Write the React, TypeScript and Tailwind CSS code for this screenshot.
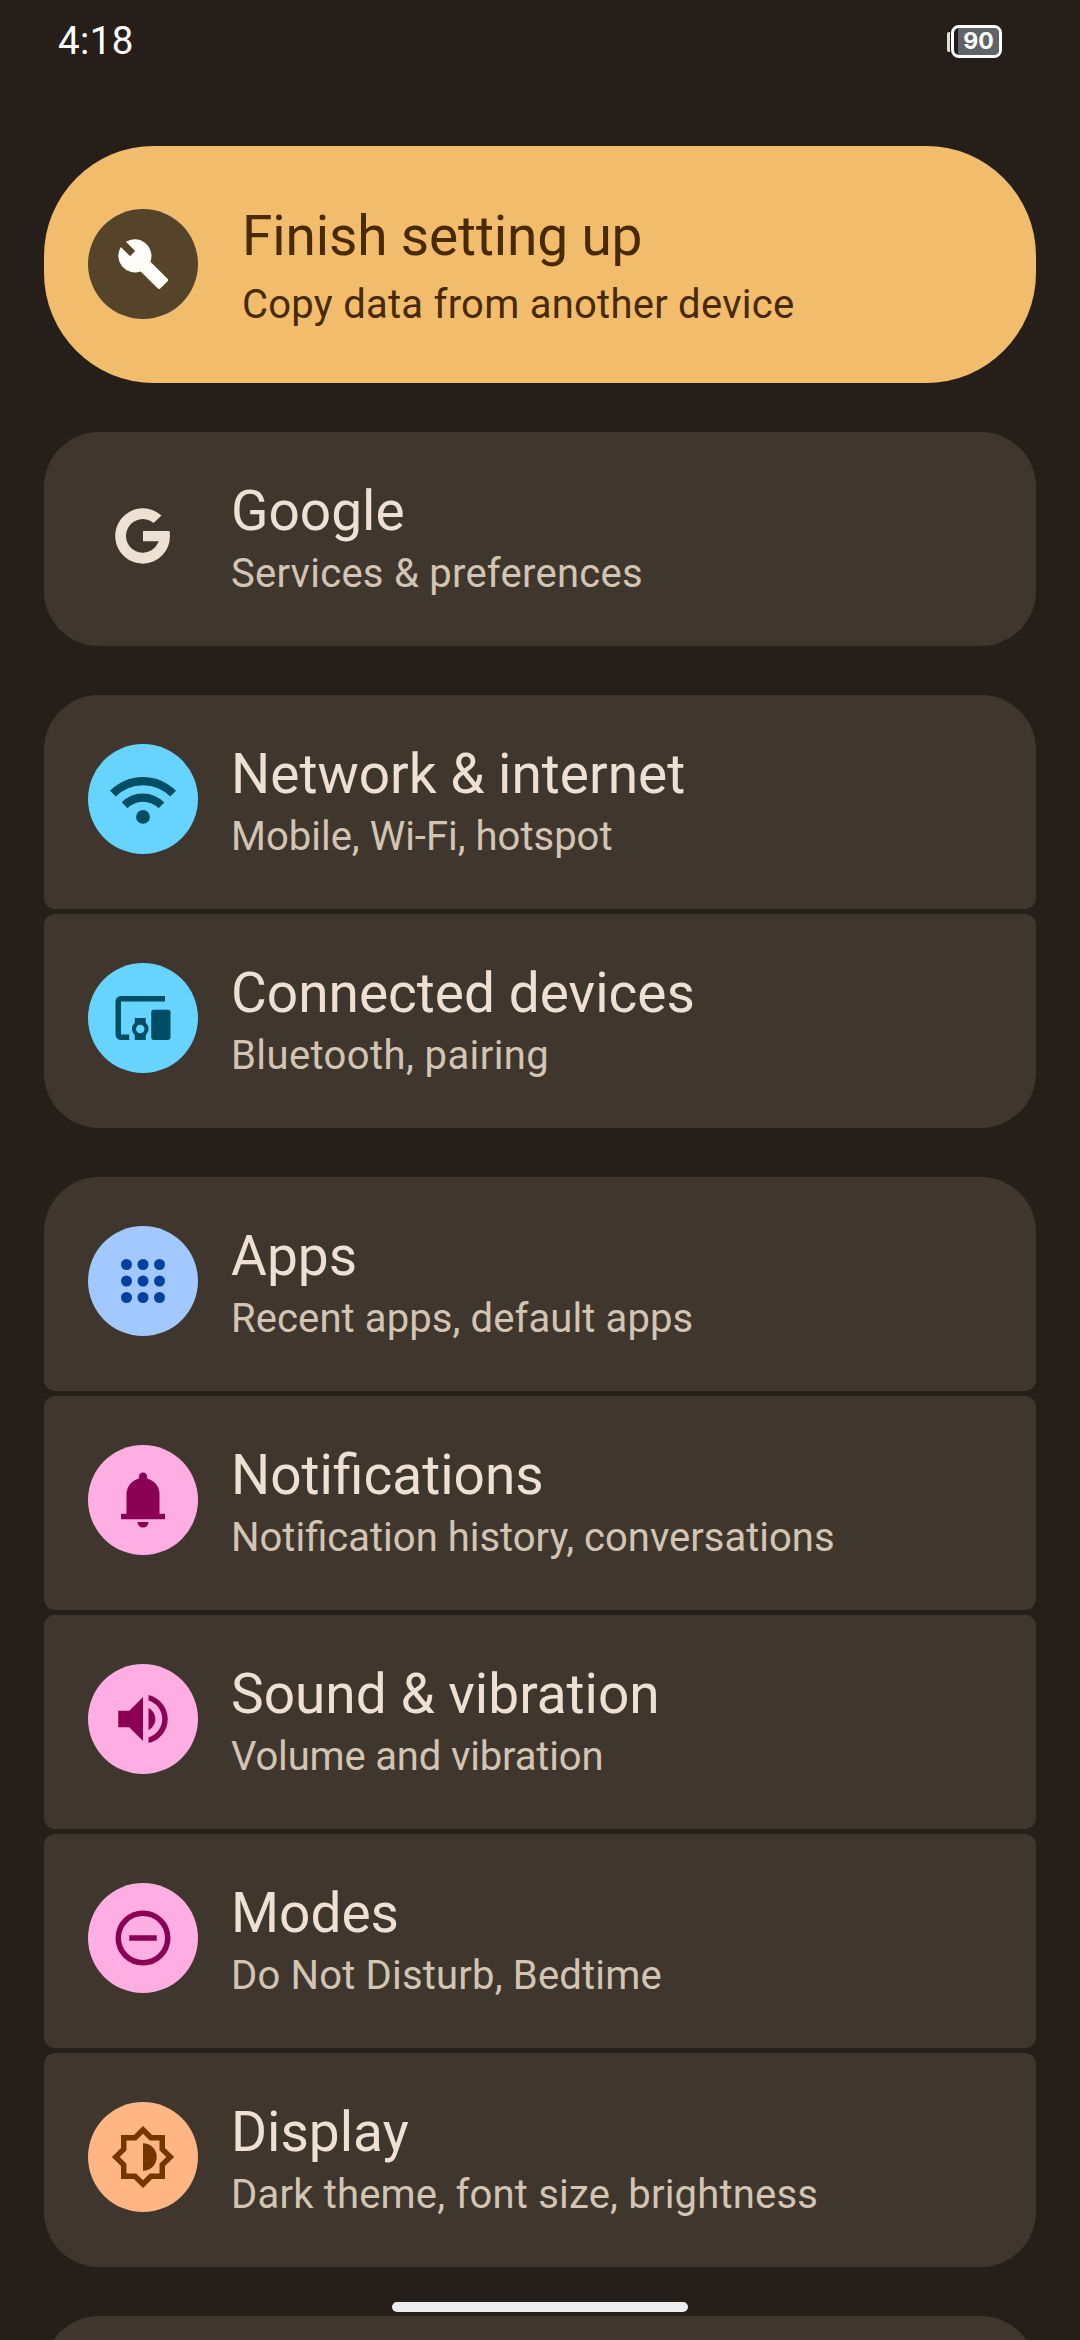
import * as React from "react";
import { clsx } from "clsx";

type Item = {
  title: string;
  summary: string;
  tracking: string;
  badge: string;
  icon: React.ReactNode;
};

const Icon = ({ children }: { children: React.ReactNode }) => (
  <svg viewBox="0 0 24 24" className="size-[66px]" fill="currentColor" aria-hidden="true">
    {children}
  </svg>
);

const WrenchIcon = () => (
  <Icon>
    <path d="M3.95 5.8 7.3 9.15 9.15 7.3 5.8 3.95A6.05 6.05 0 0 1 14.7 11.15L20.85 17.3Q21.4 17.85 20.85 18.4L18.4 20.85Q17.85 21.4 17.3 20.85L11.15 14.7A6.05 6.05 0 0 1 3.95 5.8Z" />
  </Icon>
);

const GoogleIcon = () => (
  <Icon>
    <path d="M12 10.2h9.65q.15.9.15 1.9A9.8 9.95 0 0 1 12 22.05 10.05 10.05 0 1 1 18.7 4.55L15.85 7.3A6.1 6.1 0 1 0 17.7 13.9H12Z" />
  </Icon>
);

const WifiIcon = () => (
  <Icon>
    <circle cx="12" cy="18.5" r="2.5" />
    <path d="M6.35 15.35 4.25 13.2Q5.725 11.725 7.71 10.86 9.7 10 12 10T16.29 10.875Q18.275 11.75 19.75 13.25L17.65 15.35Q16.55 14.25 15.1 13.625 13.65 13 12 13T8.9 13.625Q7.45 14.25 6.35 15.35Z" />
    <path d="M2.1 11.1 0 9Q2.3 6.65 5.375 5.325T12 4Q15.55 4 18.625 5.325T24 9L21.9 11.1Q19.975 9.175 17.44 8.09 14.9 7 12 7T6.56 8.09Q4.025 9.175 2.1 11.1Z" />
  </Icon>
);

const DevicesIcon = () => (
  <Icon>
    <path d="M4 20q-.825 0-1.41-.59T2 18V6q0-.825.59-1.41T4 4h16v2H4v12h3v2Z" />
    <path
      fillRule="evenodd"
      d="M9 20v-1.75A3 3 0 0 1 9 13.75V12h4v1.75A3 3 0 0 1 13 18.25V20ZM11 17.55a1.55 1.55 0 1 0 0-3.1 1.55 1.55 0 0 0 0 3.1Z"
    />
    <rect x="15" y="9" width="7" height="11" rx="0.9" />
  </Icon>
);

const AppsIcon = () => (
  <Icon>
    {[6, 12, 18].map((cy) => [6, 12, 18].map((cx) => <circle key={`${cx}-${cy}`} cx={cx} cy={cy} r="2" />))}
  </Icon>
);

const BellIcon = () => (
  <Icon>
    <path d="M4 19v-2h2v-7q0-2.075 1.25-3.6875T10.5 4.2v-.7q0-.625.4375-1.0625T12 2t1.0625.4375T13.5 3.5v.7q2 .5 3.25 2.1125T18 10v7h2v2Zm8 3q-.825 0-1.4125-.5875T10 20h4q0 .825-.5875 1.4125T12 22Z" />
  </Icon>
);

const VolumeIcon = () => (
  <Icon>
    <path d="M3 9v6h4l5 5V4L7 9H3zm13.5 3c0-1.77-1.02-3.29-2.5-4.03v8.05c1.48-.73 2.5-2.25 2.5-4.02zM14 3.23v2.06c2.89.86 5 3.54 5 6.71s-2.11 5.85-5 6.71v2.06c4.01-.91 7-4.49 7-8.77s-2.99-7.86-7-8.77z" />
  </Icon>
);

const ModesIcon = () => (
  <Icon>
    <circle cx="12" cy="12" r="9" fill="none" stroke="currentColor" strokeWidth="2" />
    <path d="M7 11h10v2H7z" />
  </Icon>
);

const BrightnessIcon = () => (
  <Icon>
    <path d="M20 8.69V4h-4.69L12 .69 8.69 4H4v4.69L.69 12 4 15.31V20h4.69L12 23.31 15.31 20H20v-4.69L23.31 12 20 8.69zm-2 5.79V18h-3.52L12 20.48 9.52 18H6v-3.52L3.52 12 6 9.52V6h3.52L12 3.52 14.48 6H18v3.52L20.48 12 18 14.48z" />
    <path d="M12 7v10c2.76 0 5-2.24 5-5s-2.24-5-5-5z" />
  </Icon>
);

const groups: Item[][] = [
  [
    {
      title: "Google",
      summary: "Services & preferences",
      tracking: "tracking-[0.25px]",
      badge: "text-[#efe0d4]",
      icon: <GoogleIcon />,
    },
  ],
  [
    {
      title: "Network & internet",
      summary: "Mobile, Wi-Fi, hotspot",
      tracking: "tracking-normal",
      badge: "bg-[#67d4ff] text-[#004e63]",
      icon: <WifiIcon />,
    },
    {
      title: "Connected devices",
      summary: "Bluetooth, pairing",
      tracking: "tracking-[0.4px]",
      badge: "bg-[#67d4ff] text-[#004e63]",
      icon: <DevicesIcon />,
    },
  ],
  [
    {
      title: "Apps",
      summary: "Recent apps, default apps",
      tracking: "tracking-[0.1px]",
      badge: "bg-[#a1c9ff] text-[#04409f]",
      icon: <AppsIcon />,
    },
    {
      title: "Notifications",
      summary: "Notification history, conversations",
      tracking: "tracking-normal",
      badge: "bg-[#ffaee4] text-[#8a0052]",
      icon: <BellIcon />,
    },
    {
      title: "Sound & vibration",
      summary: "Volume and vibration",
      tracking: "tracking-[-0.16px]",
      badge: "bg-[#ffaee4] text-[#8a0052]",
      icon: <VolumeIcon />,
    },
    {
      title: "Modes",
      summary: "Do Not Disturb, Bedtime",
      tracking: "tracking-[0.18px]",
      badge: "bg-[#ffaee4] text-[#8a0052]",
      icon: <ModesIcon />,
    },
    {
      title: "Display",
      summary: "Dark theme, font size, brightness",
      tracking: "tracking-[0.19px]",
      badge: "bg-[#ffb683] text-[#753400]",
      icon: <BrightnessIcon />,
    },
  ],
];

const Badge = ({ className, children }: React.ComponentProps<"div">) => (
  <div className={clsx("flex size-[110px] shrink-0 items-center justify-center rounded-full", className)}>
    {children}
  </div>
);

const StatusBar = () => (
  <header className="flex h-[146px] items-start justify-between pl-[58px] pr-[78px] text-white">
    <span className="mt-[18px] text-[38.5px]/[45px] tracking-[0.4px]">4:18</span>

    {/* battery, with its terminal on the left */}
    <div className="mt-[25px] flex items-center">
      <div className="h-5 w-[3px] rounded-l-[2px] bg-[#deddda]" />
      <div className="ml-px h-[33px] w-[51px] rounded-[8px] border-[3px] border-white bg-[#211c1a]">
        <div className="ml-1 flex h-full items-center justify-center rounded-r-[5px] bg-[#606367] font-['Inter',sans-serif] text-[23px]/[27px] font-bold">
          90
        </div>
      </div>
    </div>
  </header>
);

const SetupCard = () => (
  <section className="flex h-[237px] rounded-[110px] bg-[#f1bd6d] pl-11 text-[#482900]">
    <Badge className="mt-[63px] bg-[#554429] text-[#fffdfa]">
      <WrenchIcon />
    </Badge>
    <div className="ml-11 pt-[58px]">
      <h1 className="text-[55px]/[64px] tracking-[-0.15px]">Finish setting up</h1>
      <p className="mt-[14px] text-[40px]/[45px] tracking-[0.25px]">Copy data from another device</p>
    </div>
  </section>
);

const Row = ({ title, summary, tracking, badge, icon }: Item) => (
  <li className="flex h-[214px] rounded-[11px] bg-[#3f372e] pl-11 first:rounded-t-[55px] last:rounded-b-[55px]">
    <Badge className={clsx("mt-[49px]", badge)}>{icon}</Badge>
    <div className="ml-[33px] pt-[47px]">
      <h2 className="text-[55px]/[64px] text-[#efe0d4]">{title}</h2>
      <p className={clsx("mt-2 text-[40px]/[45px] text-[#d3c4b4]", tracking)}>{summary}</p>
    </div>
  </li>
);

export default function App() {
  return (
    <div className="relative h-[2340px] w-[1080px] overflow-hidden bg-[#261e18] font-['Roboto',sans-serif]">
      <StatusBar />

      <main className="flex flex-col gap-[49px] px-11">
        <SetupCard />

        {groups.map((items) => (
          <ul key={items[0].title} className="flex flex-col gap-[5px]">
            {items.map((item) => (
              <Row key={item.title} {...item} />
            ))}
          </ul>
        ))}

        {/* the next group, cut off by the edge of the screen */}
        <div className="h-[214px] rounded-t-[55px] bg-[#3f372e]" />
      </main>

      {/* gesture bar */}
      <div className="absolute bottom-[28px] left-[392px] h-[10px] w-[296px] rounded-full bg-[#ececec]" />
    </div>
  );
}
